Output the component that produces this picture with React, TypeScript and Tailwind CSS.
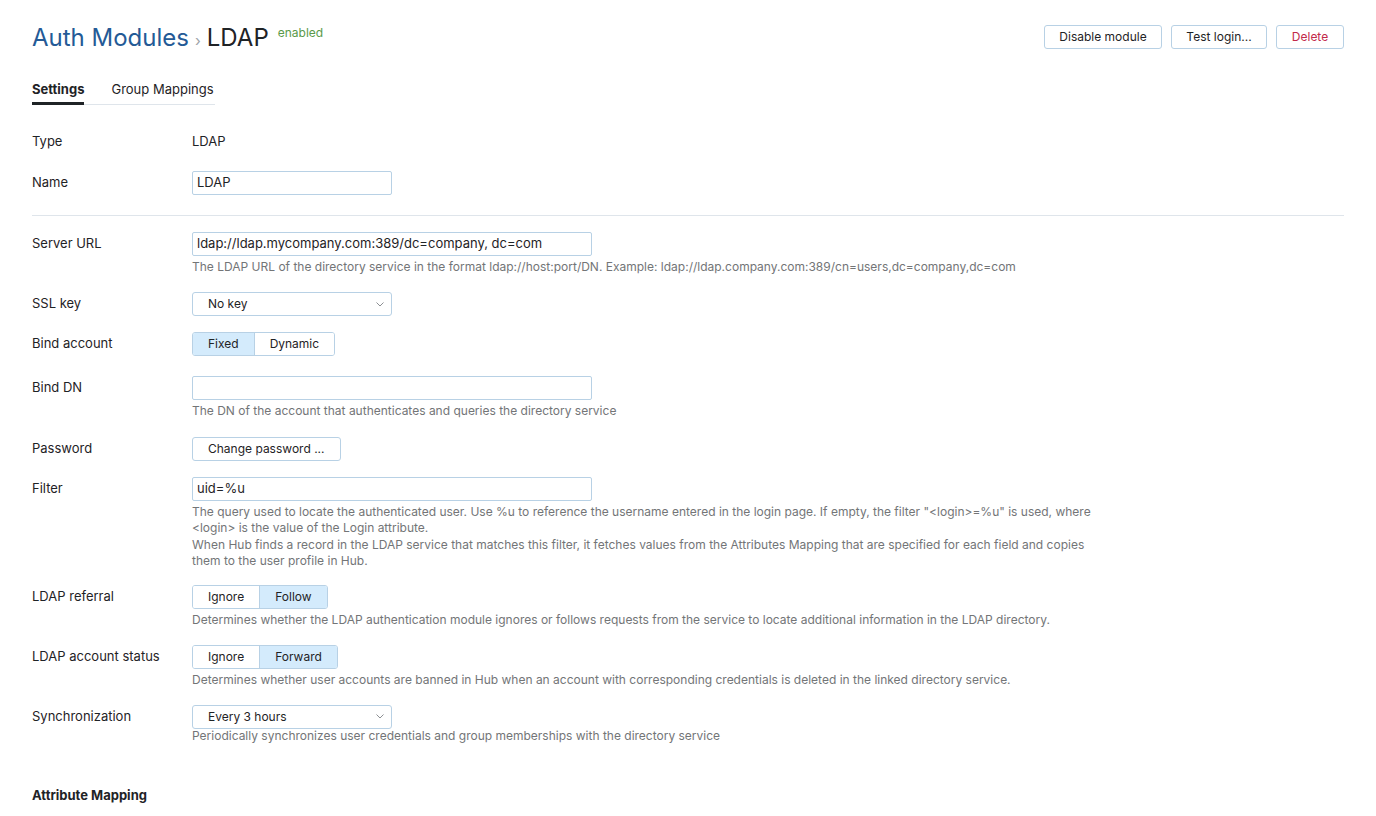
import React from "react";

const Chevron = () => (
  <svg width="8" height="5" viewBox="0 0 8 5" className="text-[#8c8f93]">
    <path d="M0.5 0.5 L4 4 L7.5 0.5" fill="none" stroke="currentColor" strokeWidth="1" />
  </svg>
);

function Row({ label, children, hint, cls = "" }: { label: string; children: React.ReactNode; hint?: React.ReactNode; cls?: string }) {
  return (
    <div className={`flex ${cls}`}>
      <div className="w-[160px] shrink-0 h-6 flex items-center text-[13px] text-[#1f2326]">{label}</div>
      <div className="flex flex-col">
        <div className="h-6 flex items-center">{children}</div>
        {hint && <div className="text-[12px] leading-[16.5px] text-[#737577] mt-[3px]">{hint}</div>}
      </div>
    </div>
  );
}

const Input = ({ value, w }: { value: string; w: string }) => (
  <div className={`${w} h-6 border border-[#b8d1e5] rounded-[2px] flex items-center px-[4px] text-[13px] text-[#1f2326]`}>{value}</div>
);

const Select = ({ value }: { value: string }) => (
  <div className="w-[200px] h-6 border border-[#b8d1e5] rounded-[3px] flex items-center justify-between pl-[15px] pr-[7px] text-[12px] text-[#1f2326]">
    <span>{value}</span>
    <Chevron />
  </div>
);

const Seg = ({ items, active }: { items: string[]; active: number }) => (
  <div className="flex h-6 border border-[#b8d1e5] rounded-[3px] overflow-hidden text-[12px] text-[#1f2326]">
    {items.map((it, i) => (
      <div
        key={it}
        className={`px-[15px] flex items-center ${i > 0 ? "border-l border-[#b8d1e5]" : ""} ${i === active ? "bg-[#d4ebfc]" : "bg-white"}`}
      >
        {it}
      </div>
    ))}
  </div>
);

const Btn = ({ children, cls = "" }: { children: React.ReactNode; cls?: string }) => (
  <div className={`h-6 border border-[#b8d1e5] rounded-[3px] flex items-center justify-center whitespace-nowrap text-[12px] ${cls}`}>{children}</div>
);

export default function App() {
  return (
    <div className="min-h-[816px] bg-white px-[32px] pt-[18px]" style={{ fontFamily: "Inter, 'Noto Sans', sans-serif" }}>
      <div className="flex justify-between items-start">
        <div className="flex items-start mt-[1px]">
          <span className="text-[24px] leading-[38px] text-[#245a96]">Auth Modules</span>
          <span className="text-[15px] leading-[38px] text-[#9ea3a8] mx-[6px] mt-[3px]">›</span>
          <span className="text-[24px] leading-[38px] text-[#1f2326]">LDAP</span>
          <span className="text-[12px] text-[#5a9a4a] ml-[9px] mt-[5px]">enabled</span>
        </div>
        <div className="flex gap-[9px] mt-[7px]">
          <Btn cls="text-[#1f2326] w-[118px]">Disable module</Btn>
          <Btn cls="text-[#1f2326] w-[96px]">Test login...</Btn>
          <Btn cls="text-[#c22a4a] w-[68px]">Delete</Btn>
        </div>
      </div>

      <div className="flex mt-[20px] w-[183px] border-b border-[#dfe5eb] text-[13px]">
        <div className="font-bold text-[#1f2326] pb-[2px] border-b-[3px] border-[#1f2326] -mb-px">Settings</div>
        <div className="text-[#1f2326] ml-[27px] pb-[2px]">Group Mappings</div>
      </div>

      <div className="flex flex-col gap-[17px] mt-[25px]">
        <Row label="Type"><span className="text-[13px] text-[#1f2326]">LDAP</span></Row>
        <Row label="Name"><Input value="LDAP" w="w-[200px]" /></Row>
      </div>

      <div className="h-px bg-[#dfe5eb] mt-[20px] mb-[16px]" />

      <div className="flex flex-col">
        <Row label="Server URL" hint="The LDAP URL of the directory service in the format ldap://host:port/DN. Example: ldap://ldap.company.com:389/cn=users,dc=company,dc=com">
          <Input value="ldap://ldap.mycompany.com:389/dc=company, dc=com" w="w-[400px]" />
        </Row>
        <Row cls="mt-[17px]" label="SSL key"><Select value="No key" /></Row>
        <Row cls="mt-[16px]" label="Bind account"><Seg items={["Fixed", "Dynamic"]} active={0} /></Row>
        <Row cls="mt-[20px]" label="Bind DN" hint="The DN of the account that authenticates and queries the directory service">
          <Input value="" w="w-[400px]" />
        </Row>
        <Row cls="mt-[17px]" label="Password"><Btn cls="text-[#1f2326] px-[15px]">Change password ...</Btn></Row>
        <Row
          cls="mt-[16px]"
          label="Filter"
          hint={
            <div className="w-[900px]">
              The query used to locate the authenticated user. Use %u to reference the username entered in the login page. If empty, the filter "&lt;login&gt;=%u" is used, where &lt;login&gt; is the value of the Login attribute.
              <br />
              When Hub finds a record in the LDAP service that matches this filter, it fetches values from the Attributes Mapping that are specified for each field and copies them to the user profile in Hub.
            </div>
          }
        >
          <Input value="uid=%u" w="w-[400px]" />
        </Row>
        <Row cls="mt-[15px]" label="LDAP referral" hint="Determines whether the LDAP authentication module ignores or follows requests from the service to locate additional information in the LDAP directory.">
          <Seg items={["Ignore", "Follow"]} active={1} />
        </Row>
        <Row cls="mt-[16.5px]" label="LDAP account status" hint="Determines whether user accounts are banned in Hub when an account with corresponding credentials is deleted in the linked directory service.">
          <Seg items={["Ignore", "Forward"]} active={1} />
        </Row>
        <Row cls="mt-[16.5px]" label="Synchronization" hint={<span className="-mt-[4px] block">Periodically synchronizes user credentials and group memberships with the directory service</span>}>
          <Select value="Every 3 hours" />
        </Row>
      </div>

      <div className="mt-[42px] text-[13px] font-bold text-[#1f2326]">Attribute Mapping</div>
    </div>
  );
}
